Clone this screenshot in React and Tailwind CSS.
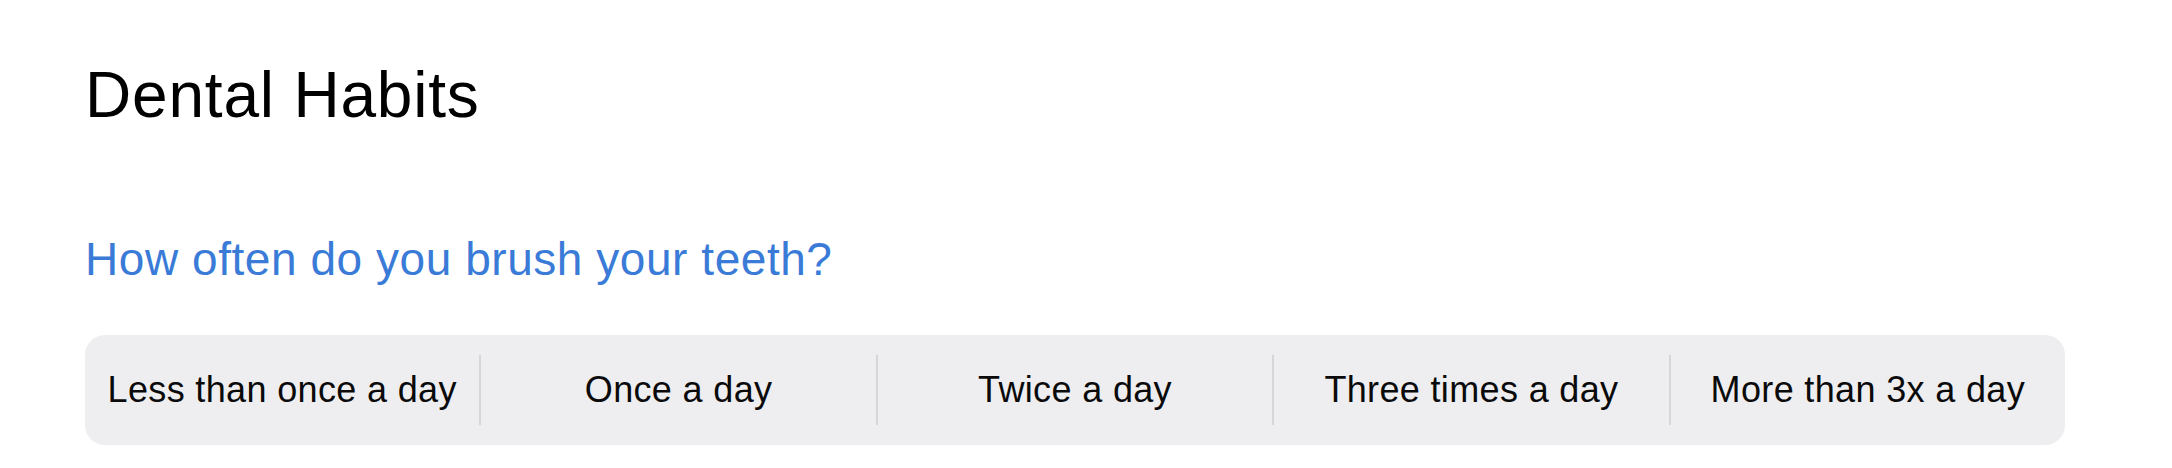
import React from "react";

const options = [
  "Less than once a day",
  "Once a day",
  "Twice a day",
  "Three times a day",
  "More than 3x a day",
];

export default function App() {
  return (
    <div
      className="w-[2172px] h-[468px] bg-white pl-[85px] pt-[63px]"
      style={{ fontFamily: '"Liberation Sans", Arial, sans-serif' }}
    >
      <h1 className="text-[64px] leading-none tracking-[0.8px] text-black font-normal">Dental Habits</h1>
      <h2 className="mt-[109px] text-[46px] leading-none tracking-[0.55px] text-[#3a7bd8] font-normal">
        How often do you brush your teeth?
      </h2>
      <div className="mt-[53px] w-[1980px] h-[110px] rounded-[20px] bg-[#eeeef0] flex items-center">
        {options.map((o, i) => (
          <React.Fragment key={o}>
            {i > 0 && <div className="w-[2px] h-[70px] bg-[#d6d6da] shrink-0" />}
            <div className="flex-1 flex items-center justify-center text-[36px] leading-none tracking-[0.35px] text-[#0a0a0a]">
              {o}
            </div>
          </React.Fragment>
        ))}
      </div>
    </div>
  );
}
